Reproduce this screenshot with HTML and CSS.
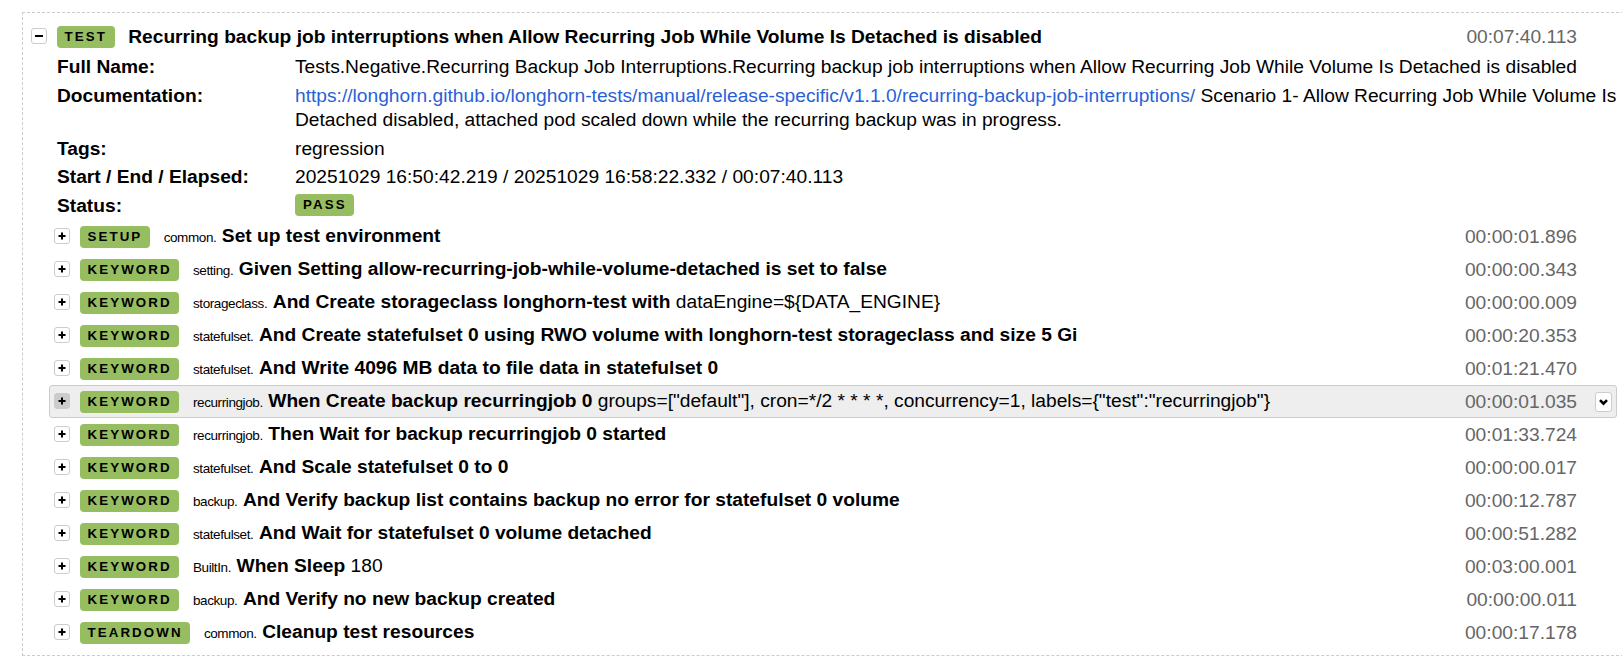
FILE: index.html
```html
<!DOCTYPE html>
<html lang="en">
<head>
<meta charset="utf-8">
<title>Test log</title>
<link rel="stylesheet" href="styles.css">
</head>
<body>
<div class="page">
  <div class="test">
    <div class="header">
      <span class="toggle"><svg viewBox="0 0 14 14" width="14" height="14"><path d="M3 7h8" stroke="#000" stroke-width="2"/></svg></span>
      <span class="label">TEST</span>
      <span class="name"><span class="kw">Recurring backup job interruptions when Allow Recurring Job While Volume Is Detached is disabled</span></span>
      <span class="elapsed">00:07:40.113</span>
      <span class="expand"><svg viewBox="0 0 15 18" width="15" height="18"><path d="M4 7.2l3.5 3.5 3.5-3.5" fill="none" stroke="#000" stroke-width="2.6"/></svg></span>
    </div>
    <div class="meta">
      <div class="k">Full Name:</div>
      <div class="v">Tests.Negative.Recurring Backup Job Interruptions.Recurring backup job interruptions when Allow Recurring Job While Volume Is Detached is disabled</div>
      <div class="k">Documentation:</div>
      <div class="v"><a class="link" href="#">https://longhorn.github.io/longhorn-tests/manual/release-specific/v1.1.0/recurring-backup-job-interruptions/</a> Scenario 1- Allow Recurring Job While Volume Is Detached disabled, attached pod scaled down while the recurring backup was in progress.</div>
      <div class="k">Tags:</div>
      <div class="v">regression</div>
      <div class="k">Start / End / Elapsed:</div>
      <div class="v">20251029 16:50:42.219 / 20251029 16:58:22.332 / 00:07:40.113</div>
      <div class="k">Status:</div>
      <div class="v"><span class="label status">PASS</span></div>
    </div>
    <div class="children">
      <div class="header">
        <span class="toggle"><svg viewBox="0 0 14 14" width="14" height="14"><path d="M3.5 7h7M7 3.5v7" stroke="#000" stroke-width="2"/></svg></span>
        <span class="label">SETUP</span>
        <span class="name"><span class="parent">common.</span><span class="kw">Set up test environment</span></span>
        <span class="elapsed">00:00:01.896</span>
        <span class="expand"><svg viewBox="0 0 15 18" width="15" height="18"><path d="M4 7.2l3.5 3.5 3.5-3.5" fill="none" stroke="#000" stroke-width="2.6"/></svg></span>
      </div>
      <div class="header">
        <span class="toggle"><svg viewBox="0 0 14 14" width="14" height="14"><path d="M3.5 7h7M7 3.5v7" stroke="#000" stroke-width="2"/></svg></span>
        <span class="label">KEYWORD</span>
        <span class="name"><span class="parent">setting.</span><span class="kw">Given Setting allow-recurring-job-while-volume-detached is set to false</span></span>
        <span class="elapsed">00:00:00.343</span>
        <span class="expand"><svg viewBox="0 0 15 18" width="15" height="18"><path d="M4 7.2l3.5 3.5 3.5-3.5" fill="none" stroke="#000" stroke-width="2.6"/></svg></span>
      </div>
      <div class="header">
        <span class="toggle"><svg viewBox="0 0 14 14" width="14" height="14"><path d="M3.5 7h7M7 3.5v7" stroke="#000" stroke-width="2"/></svg></span>
        <span class="label">KEYWORD</span>
        <span class="name"><span class="parent">storageclass.</span><span class="kw">And Create storageclass longhorn-test with</span> <span class="args">dataEngine=${DATA_ENGINE}</span></span>
        <span class="elapsed">00:00:00.009</span>
        <span class="expand"><svg viewBox="0 0 15 18" width="15" height="18"><path d="M4 7.2l3.5 3.5 3.5-3.5" fill="none" stroke="#000" stroke-width="2.6"/></svg></span>
      </div>
      <div class="header">
        <span class="toggle"><svg viewBox="0 0 14 14" width="14" height="14"><path d="M3.5 7h7M7 3.5v7" stroke="#000" stroke-width="2"/></svg></span>
        <span class="label">KEYWORD</span>
        <span class="name"><span class="parent">statefulset.</span><span class="kw">And Create statefulset 0 using RWO volume with longhorn-test storageclass and size 5 Gi</span></span>
        <span class="elapsed">00:00:20.353</span>
        <span class="expand"><svg viewBox="0 0 15 18" width="15" height="18"><path d="M4 7.2l3.5 3.5 3.5-3.5" fill="none" stroke="#000" stroke-width="2.6"/></svg></span>
      </div>
      <div class="header">
        <span class="toggle"><svg viewBox="0 0 14 14" width="14" height="14"><path d="M3.5 7h7M7 3.5v7" stroke="#000" stroke-width="2"/></svg></span>
        <span class="label">KEYWORD</span>
        <span class="name"><span class="parent">statefulset.</span><span class="kw">And Write 4096 MB data to file data in statefulset 0</span></span>
        <span class="elapsed">00:01:21.470</span>
        <span class="expand"><svg viewBox="0 0 15 18" width="15" height="18"><path d="M4 7.2l3.5 3.5 3.5-3.5" fill="none" stroke="#000" stroke-width="2.6"/></svg></span>
      </div>
      <div class="header hover">
        <span class="toggle"><svg viewBox="0 0 14 14" width="14" height="14"><path d="M3.5 7h7M7 3.5v7" stroke="#000" stroke-width="2"/></svg></span>
        <span class="label">KEYWORD</span>
        <span class="name"><span class="parent">recurringjob.</span><span class="kw">When Create backup recurringjob 0</span> <span class="args">groups=["default"], cron=*/2 * * * *, concurrency=1, labels={"test":"recurringjob"}</span></span>
        <span class="elapsed">00:00:01.035</span>
        <span class="expand"><svg viewBox="0 0 15 18" width="15" height="18"><path d="M4 7.2l3.5 3.5 3.5-3.5" fill="none" stroke="#000" stroke-width="2.6"/></svg></span>
      </div>
      <div class="header">
        <span class="toggle"><svg viewBox="0 0 14 14" width="14" height="14"><path d="M3.5 7h7M7 3.5v7" stroke="#000" stroke-width="2"/></svg></span>
        <span class="label">KEYWORD</span>
        <span class="name"><span class="parent">recurringjob.</span><span class="kw">Then Wait for backup recurringjob 0 started</span></span>
        <span class="elapsed">00:01:33.724</span>
        <span class="expand"><svg viewBox="0 0 15 18" width="15" height="18"><path d="M4 7.2l3.5 3.5 3.5-3.5" fill="none" stroke="#000" stroke-width="2.6"/></svg></span>
      </div>
      <div class="header">
        <span class="toggle"><svg viewBox="0 0 14 14" width="14" height="14"><path d="M3.5 7h7M7 3.5v7" stroke="#000" stroke-width="2"/></svg></span>
        <span class="label">KEYWORD</span>
        <span class="name"><span class="parent">statefulset.</span><span class="kw">And Scale statefulset 0 to 0</span></span>
        <span class="elapsed">00:00:00.017</span>
        <span class="expand"><svg viewBox="0 0 15 18" width="15" height="18"><path d="M4 7.2l3.5 3.5 3.5-3.5" fill="none" stroke="#000" stroke-width="2.6"/></svg></span>
      </div>
      <div class="header">
        <span class="toggle"><svg viewBox="0 0 14 14" width="14" height="14"><path d="M3.5 7h7M7 3.5v7" stroke="#000" stroke-width="2"/></svg></span>
        <span class="label">KEYWORD</span>
        <span class="name"><span class="parent">backup.</span><span class="kw">And Verify backup list contains backup no error for statefulset 0 volume</span></span>
        <span class="elapsed">00:00:12.787</span>
        <span class="expand"><svg viewBox="0 0 15 18" width="15" height="18"><path d="M4 7.2l3.5 3.5 3.5-3.5" fill="none" stroke="#000" stroke-width="2.6"/></svg></span>
      </div>
      <div class="header">
        <span class="toggle"><svg viewBox="0 0 14 14" width="14" height="14"><path d="M3.5 7h7M7 3.5v7" stroke="#000" stroke-width="2"/></svg></span>
        <span class="label">KEYWORD</span>
        <span class="name"><span class="parent">statefulset.</span><span class="kw">And Wait for statefulset 0 volume detached</span></span>
        <span class="elapsed">00:00:51.282</span>
        <span class="expand"><svg viewBox="0 0 15 18" width="15" height="18"><path d="M4 7.2l3.5 3.5 3.5-3.5" fill="none" stroke="#000" stroke-width="2.6"/></svg></span>
      </div>
      <div class="header">
        <span class="toggle"><svg viewBox="0 0 14 14" width="14" height="14"><path d="M3.5 7h7M7 3.5v7" stroke="#000" stroke-width="2"/></svg></span>
        <span class="label">KEYWORD</span>
        <span class="name"><span class="parent">BuiltIn.</span><span class="kw">When Sleep</span> <span class="args">180</span></span>
        <span class="elapsed">00:03:00.001</span>
        <span class="expand"><svg viewBox="0 0 15 18" width="15" height="18"><path d="M4 7.2l3.5 3.5 3.5-3.5" fill="none" stroke="#000" stroke-width="2.6"/></svg></span>
      </div>
      <div class="header">
        <span class="toggle"><svg viewBox="0 0 14 14" width="14" height="14"><path d="M3.5 7h7M7 3.5v7" stroke="#000" stroke-width="2"/></svg></span>
        <span class="label">KEYWORD</span>
        <span class="name"><span class="parent">backup.</span><span class="kw">And Verify no new backup created</span></span>
        <span class="elapsed">00:00:00.011</span>
        <span class="expand"><svg viewBox="0 0 15 18" width="15" height="18"><path d="M4 7.2l3.5 3.5 3.5-3.5" fill="none" stroke="#000" stroke-width="2.6"/></svg></span>
      </div>
      <div class="header">
        <span class="toggle"><svg viewBox="0 0 14 14" width="14" height="14"><path d="M3.5 7h7M7 3.5v7" stroke="#000" stroke-width="2"/></svg></span>
        <span class="label">TEARDOWN</span>
        <span class="name"><span class="parent">common.</span><span class="kw">Cleanup test resources</span></span>
        <span class="elapsed">00:00:17.178</span>
        <span class="expand"><svg viewBox="0 0 15 18" width="15" height="18"><path d="M4 7.2l3.5 3.5 3.5-3.5" fill="none" stroke="#000" stroke-width="2.6"/></svg></span>
      </div>
    </div>
  </div>
</div>
</body>
</html>
```

FILE: styles.css
```css
html, body {
  margin: 0;
  padding: 0;
  overflow: hidden;
  background: #fff;
}

body {
  font-family: "Liberation Sans", Arial, Helvetica, sans-serif;
  font-size: 19.2px;
  color: #000;
}

.page {
  padding-top: 12px;
}

.test {
  box-sizing: border-box;
  width: 1602px;
  margin-left: 22px;
  border: 1px dashed #ccc;
  padding: 7px 6px 6px 3px;
}

.header {
  display: flex;
  align-items: center;
  height: 23px;
  line-height: 23px;
  padding: 4px;
  border: 1px solid #fff;
  border-radius: 3px;
  white-space: nowrap;
}

.header.hover {
  background: #eee;
  border-color: #ccc;
}

.toggle {
  box-sizing: border-box;
  flex: none;
  align-self: flex-start;
  width: 16px;
  height: 16px;
  margin-top: 3px;
  margin-right: 9.5px;
  border: 1px solid #ccc;
  border-radius: 3px;
  background: #fff;
  display: flex;
}

.toggle svg {
  display: block;
}

.header.hover .toggle {
  background: #ccc;
  border-color: #ccc;
}

.label {
  flex: none;
  display: inline-block;
  height: 22px;
  line-height: 22px;
  padding: 0 7.8px 0 8px;
  font-size: 13.3px;
  font-weight: bold;
  letter-spacing: 2.1px;
  color: #000;
  background: #97bd61;
  border-radius: 4px;
  margin-right: 13.5px;
}

.label.status {
  vertical-align: middle;
  margin-right: 0;
  position: relative;
  top: -1px;
}

.name {
  flex: 1 1 auto;
  min-width: 0;
  overflow: hidden;
}

.parent {
  font-size: 13.5px;
  letter-spacing: -0.4px;
  margin-right: 5.5px;
}

.kw {
  font-weight: bold;
}

.elapsed {
  flex: none;
  color: #666;
  margin-left: 12px;
}

.expand {
  flex: none;
  box-sizing: border-box;
  visibility: hidden;
  width: 17px;
  height: 20px;
  margin-left: 18px;
  border: 1px solid #ccc;
  border-radius: 3px;
  background: #fff;
  display: flex;
  align-items: center;
  justify-content: center;
}

.expand svg {
  display: block;
}

.header.hover .expand {
  visibility: visible;
}

.meta {
  margin-left: 23px;
  margin-right: -8px;
  padding-left: 8px;
  display: grid;
  grid-template-columns: 238px 1fr;
  line-height: 24.5px;
}

.meta > div {
  padding: 2px 0;
}

.meta .k {
  font-weight: bold;
}

.link {
  color: #2a5fd8;
  text-decoration: none;
}

.children {
  margin-left: 23px;
}
```
